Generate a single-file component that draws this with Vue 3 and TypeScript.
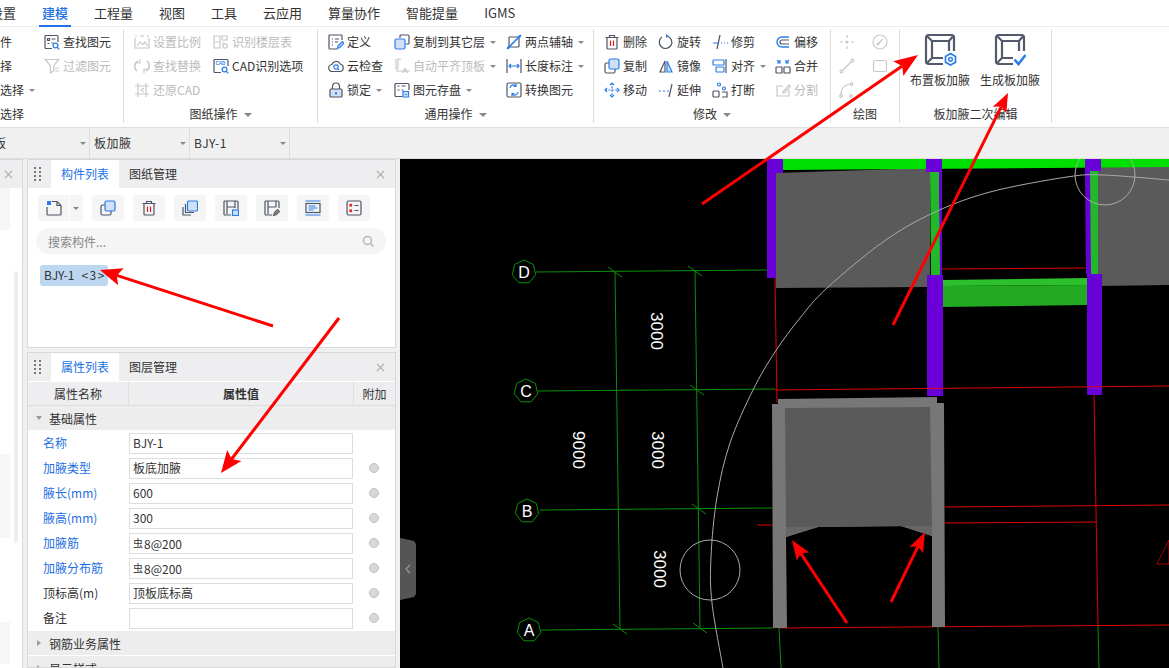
<script setup lang="ts">
const D = '#4d5567'
const B = '#2b7de9'
const G = '#c8c8c8'
const L = '#cfe0f7'

const icons: Record<string, string> = {
  find: `<path d="M8 14.5H2a1 1 0 0 1-1-1v-11a1 1 0 0 1 1-1h11a1 1 0 0 1 1 1V8"/><path d="M3.5 4.5h2v2h-2zM7.5 5h4M3.5 9.5h2M7.5 9h2"/><circle cx="11.5" cy="11.5" r="2.4" stroke="${B}"/><path d="M13.3 13.3l2 2" stroke="${B}"/>`,
  filter: `<path d="M1 1.5h14L9.8 7.5v5l-3.4 2.5V7.5z" stroke="${G}"/><path d="M11 10h4M11 13h4" stroke="${G}"/>`,
  scale: `<path d="M1 4v10h14V4M1 2h2M6 2h4M13 2h2" stroke="${G}"/><path d="M3 12l3-4 3 2.5L11 8l2.5 4" stroke="${G}"/>`,
  floors: `<path d="M1 2h6v12H1zM1 8h6M9 2h5v4H9zM9 9h2" stroke="${G}"/><circle cx="12" cy="12" r="2.2" stroke="${G}"/>`,
  replace: `<path d="M4 3a6 6 0 0 0-1 10M12 13a6 6 0 0 0 1-10" stroke="${G}" stroke-width="1.6"/><path d="M6 1v4H3M10 15v-4h3" stroke="${G}"/>`,
  cadopt: `<path d="M8 14.5H2a1 1 0 0 1-1-1v-11a1 1 0 0 1 1-1h12a1 1 0 0 1 1 1V8"/><text x="2.4" y="6.5" font-size="4.6" font-weight="700" fill="${B}" stroke="none" font-family="Liberation Sans">CAD</text><circle cx="11.5" cy="11.5" r="2.4" stroke="${B}"/><path d="M13.3 13.3l2 2" stroke="${B}"/>`,
  restore: `<path d="M1 4h14M1 12h14M4 1v14M12 1v14" stroke="${G}"/><path d="M10 6l-3 2 3 2" stroke="${G}"/>`,
  define: `<path d="M14 6V2a1 1 0 0 0-1-1H2a1 1 0 0 0-1 1v12a1 1 0 0 0 1 1h7"/><path d="M4 5h1M7 5h4M4 8h1M7 8h3M4 11h1"/><path d="M9.5 14.5l.6-2.6 4.4-4.4 1.6 1.6-4.4 4.4z" stroke="${B}" fill="${L}"/>`,
  cloud: `<path d="M4.5 13.5a3.5 3.5 0 0 1-.6-7A4.5 4.5 0 0 1 12.2 6a3.8 3.8 0 0 1-.4 7.5z"/><circle cx="8" cy="9" r="2.2" stroke="${B}"/><path d="M9.6 10.6l1.4 1.4" stroke="${B}"/>`,
  lock: `<rect x="2" y="7" width="12" height="8" rx="1" fill="${L}"/><path d="M4.5 7V4.5a3.5 3.5 0 0 1 7 0V7"/><path d="M8 10v2.5" stroke="${B}" stroke-width="1.8"/>`,
  copylayer: `<rect x="1" y="5" width="10" height="10" rx="1.5" fill="${L}" stroke="${B}"/><path d="M6 4V2a1 1 0 0 1 1-1h7a1 1 0 0 1 1 1v7a1 1 0 0 1-1 1h-2"/>`,
  align: `<path d="M2 1v10h2M7 1H4v10M2 13h14" stroke="${G}"/><text x="8" y="15" font-size="8" font-weight="700" fill="${G}" stroke="none" font-family="Liberation Sans">A</text>`,
  save: `<path d="M8 14.5H2a1 1 0 0 1-1-1v-11a1 1 0 0 1 1-1h12a1 1 0 0 1 1 1V8"/><path d="M3.5 4h2M7.5 4h4M3.5 8h2M7.5 8h2"/><path d="M9 9.5h5.5V15H9z" fill="${L}" stroke="${B}"/><path d="M11 12.5h1.8" stroke="${B}"/>`,
  twopoint: `<path d="M3 3h10M3 3v10M13 3v10M3 13h10"/><path d="M1 15L15 1" stroke="${B}" stroke-width="1.6"/><circle cx="2.5" cy="13.5" r="1.3" fill="${B}" stroke="none"/><circle cx="13.5" cy="2.5" r="1.3" fill="${B}" stroke="none"/>`,
  dim: `<path d="M1 1v14M15 1v14"/><path d="M3 8h10M5 6L3 8l2 2M11 6l2 2-2 2" stroke="${B}"/>`,
  convert: `<rect x="1" y="1" width="14" height="14" rx="1.5"/><path d="M4 6a3.5 3.5 0 0 1 6-2M10 2v2.5H7.5M12 10a3.5 3.5 0 0 1-6 2M6 14v-2.5h2.5" stroke="${B}"/>`,
  del: `<path d="M1.5 3.5h13M5.5 3.5V1.5h5v2M3 3.5V14a1 1 0 0 0 1 1h8a1 1 0 0 0 1-1V3.5"/><path d="M6.5 6.5v5.5M9.5 6.5v5.5" stroke="#e02020"/>`,
  rotate: `<path d="M9.5 2.2A6.3 6.3 0 1 1 4 3"/><path d="M8 0v4l3-2z" fill="${B}" stroke="none"/>`,
  trim: `<path d="M1 9h6M9 9h1M12 9h1M15 9h1" stroke="${B}"/><path d="M8 1L5 15"/>`,
  copy: `<rect x="1" y="5" width="10" height="10" rx="1.5"/><rect x="5" y="1" width="10" height="10" rx="1.5" fill="${L}" stroke="${B}"/>`,
  mirror: `<path d="M7 3L2 14h5z"/><path d="M9 3l5 11H9z" fill="${L}" stroke="${B}"/>`,
  move: `<path d="M8 1v14M1 8h14" stroke="${B}" stroke-dasharray="2 1.4"/><path d="M6 3l2-2 2 2M6 13l2 2 2-2M3 6L1 8l2 2M13 6l2 2-2 2" stroke="${B}"/>`,
  extend: `<path d="M1 9h2M5 9h2M9 9h2" stroke="${B}"/><path d="M14 2l-3 13"/>`,
  alignbox: `<path d="M14 1v14"/><rect x="1" y="2" width="11" height="5" rx=".8" stroke="${B}"/><rect x="4" y="9" width="8" height="5" rx=".8" stroke="${B}"/>`,
  breakline: `<circle cx="7" cy="2.5" r="1.5" stroke="${B}"/><circle cx="12" cy="6.5" r="1.5" stroke="${B}"/><rect x="1" y="9" width="6" height="6" rx="1"/><path d="M10 10h5v5h-5"/>`,
  offset: `<path d="M14 3H7a5 5 0 0 0 0 10h7" stroke="${B}" stroke-width="1.4"/><path d="M14 6H7a2 2 0 0 0 0 4h7"/>`,
  merge: `<rect x="1" y="9" width="6" height="6" rx=".6"/><rect x="9" y="9" width="6" height="6" rx=".6"/><path d="M2 2l3 3M5 2v3H2M14 2l-3 3M11 2v3h3" stroke="${B}"/>`,
  split: `<path d="M8 4H2v10h12V8" stroke="${G}"/><path d="M8 10l6-7 1.5 1.5-6 6.5H8z" stroke="${G}"/>`,
  point: `<path d="M1 8h3M12 8h3M8 1v3M8 12v3" stroke="${G}"/><circle cx="8" cy="8" r="1.6" fill="${G}" stroke="none"/>`,
  dial: `<circle cx="8" cy="8" r="7" stroke="${G}"/><path d="M6 10l5-5" stroke="${G}"/><circle cx="6" cy="10" r="1" stroke="${G}"/>`,
  line: `<path d="M3.5 12.5l9-9" stroke="${G}"/><circle cx="2.5" cy="13.5" r="1.4" stroke="${G}"/><circle cx="13.5" cy="2.5" r="1.4" stroke="${G}"/>`,
  rect: `<rect x="1.5" y="2.5" width="13" height="11" rx="1.5" stroke="${G}"/>`,
  arc: `<path d="M2 13C2 7 5 3 11 2" stroke="${G}"/><circle cx="2" cy="14" r="1.3" stroke="${G}"/><circle cx="12.5" cy="2" r="1.3" stroke="${G}"/><circle cx="12" cy="14" r="1.3" stroke="${G}"/>`,
  newdoc: `<path d="M6 1.5h5l4 4V14a1 1 0 0 1-1 1H2a1 1 0 0 1-1-1V7"/><path d="M11 1.5V5.5h4"/><path d="M1 1h4v4H1z" fill="${B}" stroke="none"/>`,
  copymany: `<rect x="5.5" y="1" width="10" height="10" rx="1.2" fill="${L}" stroke="${B}"/><path d="M3.5 4v8.5H12M1 7v8h8"/>`,
  library: `<path d="M8 15H2a1 1 0 0 1-1-1V2a1 1 0 0 1 1-1h12a1 1 0 0 1 1 1v7"/><path d="M4 1v13M12 1v7M4 7h8"/><rect x="9.5" y="10" width="6" height="5.5" fill="${L}" stroke="${B}"/>`,
  pick: `<path d="M8 15H2a1 1 0 0 1-1-1V2a1 1 0 0 1 1-1h12a1 1 0 0 1 1 1v6"/><path d="M4 1v13M12 1v6M4 7h8"/><path d="M9.5 15.5l1-3 3-3 2 2-3 3z" fill="#888" stroke="#666"/>`,
  textblock: `<path d="M.5 1h15M.5 15h15" stroke="${B}"/><rect x="1" y="3.5" width="14" height="9"/><path d="M3.5 6h7M3.5 8h9M3.5 10h5" stroke="${B}"/>`,
  checklist: `<rect x="1" y="1" width="14" height="14" rx="1.5"/><path d="M3.5 4L6 6.5M6 4L3.5 6.5M3.5 9.500L6 12M6 9.500L3.5 12" stroke="#e02020"/><path d="M8.5 5.5h4M8.5 10.500h4"/>`,
  search: `<circle cx="5.5" cy="5.500" r="4" stroke="#b5b5b5" stroke-width="1.5"/><path d="M8.500 8.500l3 3" stroke="#b5b5b5" stroke-width="1.5"/>`,
}

const bigFrame = `<path d="M30 18V4.5A2.5 2.5 0 0 0 27.5 2h-23A2.5 2.5 0 0 0 2 4.5v24A2.5 2.5 0 0 0 4.5 31H19"/><path d="M8 8h17v10M8 8v17h11M3 3l5 5M29.300 3l-4.300 5M8 25l-5 5"/>`
const bigGear = `<path d="M26.5 20.5l5 2.900v5.800l-5 2.900-5-2.900v-5.800z" stroke="${B}" stroke-width="1.7"/><circle cx="26.5" cy="26.300" r="1.9" stroke="${B}" stroke-width="1.5"/>`
const bigCheck = `<path d="M20.5 26.5l4 4.5 7-9" stroke="${B}" stroke-width="2.6"/>`

interface Item { icon?: string; text?: string; off?: boolean; caret?: boolean }
interface Group { width: number; pad: number; cols: { w: number; items: Item[] }[]; label: string; more?: boolean; left?: boolean }

const menus = ['设置', '建模', '工程量', '视图', '工具', '云应用', '算量协作', '智能提量', 'IGMS']

const groups: Group[] = [
  {
    width: 124, pad: 0, label: '选择', left: true,
    cols: [
      { w: 44, items: [{ text: '件' }, { text: '择' }, { text: '选择', caret: true }] },
      { w: 79, items: [{ icon: 'find', text: '查找图元' }, { icon: 'filter', text: '过滤图元', off: true }] },
    ],
  },
  {
    width: 194, pad: 10, label: '图纸操作', more: true,
    cols: [
      { w: 79, items: [{ icon: 'scale', text: '设置比例', off: true }, { icon: 'replace', text: '查找替换', off: true }, { icon: 'restore', text: '还原CAD', off: true }] },
      { w: 100, items: [{ icon: 'floors', text: '识别楼层表', off: true }, { icon: 'cadopt', text: 'CAD识别选项' }] },
    ],
  },
  {
    width: 276, pad: 10, label: '通用操作', more: true,
    cols: [
      { w: 66, items: [{ icon: 'define', text: '定义' }, { icon: 'cloud', text: '云检查' }, { icon: 'lock', text: '锁定', caret: true }] },
      { w: 112, items: [{ icon: 'copylayer', text: '复制到其它层', caret: true }, { icon: 'align', text: '自动平齐顶板', off: true, caret: true }, { icon: 'save', text: '图元存盘', caret: true }] },
      { w: 84, items: [{ icon: 'twopoint', text: '两点辅轴', caret: true }, { icon: 'dim', text: '长度标注', caret: true }, { icon: 'convert', text: '转换图元' }] },
    ],
  },
  {
    width: 237, pad: 10, label: '修改', more: true,
    cols: [
      { w: 54, items: [{ icon: 'del', text: '删除' }, { icon: 'copy', text: '复制' }, { icon: 'move', text: '移动' }] },
      { w: 54, items: [{ icon: 'rotate', text: '旋转' }, { icon: 'mirror', text: '镜像' }, { icon: 'extend', text: '延伸' }] },
      { w: 63, items: [{ icon: 'trim', text: '修剪' }, { icon: 'alignbox', text: '对齐', caret: true }, { icon: 'breakline', text: '打断' }] },
      { w: 50, items: [{ icon: 'offset', text: '偏移' }, { icon: 'merge', text: '合并' }, { icon: 'split', text: '分割', off: true }] },
    ],
  },
  {
    width: 69, pad: 8, label: '绘图',
    cols: [
      { w: 33, items: [{ icon: 'point' }, { icon: 'line' }, { icon: 'arc' }] },
      { w: 22, items: [{ icon: 'dial' }, { icon: 'rect' }] },
    ],
  },
]

const bigButtons = [
  { label: '布置板加腋', svg: bigFrame + bigGear },
  { label: '生成板加腋', svg: bigFrame + bigCheck },
]

const selectors = ['板', '板加腋', 'BJY-1']
const toolIcons = ['copy', 'del', 'copymany', 'library', 'pick', 'textblock', 'checklist']

const props = [
  { name: '名称', value: 'BJY-1', blue: true, radio: false },
  { name: '加腋类型', value: '板底加腋', blue: true, radio: true },
  { name: '腋长(mm)', value: '600', blue: true, radio: true },
  { name: '腋高(mm)', value: '300', blue: true, radio: true },
  { name: '加腋筋', value: '8@200', rebar: true, blue: true, radio: true },
  { name: '加腋分布筋', value: '8@200', rebar: true, blue: true, radio: true },
  { name: '顶标高(m)', value: '顶板底标高', blue: false, radio: true },
  { name: '备注', value: '', blue: false, radio: true },
]

// drawing, in page coordinates
const redLines = [
  [942, 269, 1085, 268], [775, 390, 1169, 386], [775, 278, 777, 403], [1094, 395, 1098, 626],
  [945, 507, 1169, 505], [945, 523, 1096, 522], [757, 525, 772, 525], [780, 628, 1169, 625],
]
const greenLines = [
  [536, 272, 767, 270], [538, 391, 775, 389], [540, 510, 772, 508], [541, 630, 773, 628],
  [615, 272, 620, 629], [695, 271, 700, 628], [779, 628, 781, 668], [938, 627, 939, 668], [1098, 626, 1099, 668],
]
const ticks = [[615, 272], [695, 271], [697, 390], [699, 509], [700, 628], [620, 629]]
const axes = [
  { t: 'D', x: 524, y: 272 }, { t: 'C', x: 526, y: 391 }, { t: 'B', x: 527, y: 511 }, { t: 'A', x: 529, y: 630 },
]
const dims = [
  { t: '3000', x: 656, y: 331 }, { t: '3000', x: 657, y: 450 }, { t: '3000', x: 659, y: 569 }, { t: '9000', x: 578, y: 450 },
]
const arcPoints = [
  [723, 668], [712, 603], [711, 557], [717, 497], [730, 443], [753, 390], [775, 352], [800, 318], [827, 288],
  [883, 242], [933, 213], [990, 192], [1067, 177], [1103, 175], [1169, 180],
]

// smooth curve through the measured points of the big arc
function smoothPath(pts: number[][]): string {
  let d = `M${pts[0][0]} ${pts[0][1]}`
  for (let i = 0; i < pts.length - 1; i++) {
    const p0 = pts[Math.max(i - 1, 0)]
    const p1 = pts[i]
    const p2 = pts[i + 1]
    const p3 = pts[Math.min(i + 2, pts.length - 1)]
    const c1x = p1[0] + (p2[0] - p0[0]) / 6
    const c1y = p1[1] + (p2[1] - p0[1]) / 6
    const c2x = p2[0] - (p3[0] - p1[0]) / 6
    const c2y = p2[1] - (p3[1] - p1[1]) / 6
    d += `C${c1x.toFixed(1)} ${c1y.toFixed(1)} ${c2x.toFixed(1)} ${c2y.toFixed(1)} ${p2[0]} ${p2[1]}`
  }
  return d
}
const arcPath = smoothPath(arcPoints)

function heptagon(cx: number, cy: number, r: number): string {
  const pts: string[] = []
  for (let i = 0; i < 7; i++) {
    const a = (Math.PI * 2 * i) / 7 - Math.PI / 2
    pts.push(`${(cx + r * Math.cos(a)).toFixed(1)},${(cy + r * Math.sin(a)).toFixed(1)}`)
  }
  return pts.join(' ')
}

function arrow(x1: number, y1: number, x2: number, y2: number, len: number, half: number, width: number) {
  const d = Math.hypot(x2 - x1, y2 - y1)
  const ux = (x2 - x1) / d
  const uy = (y2 - y1) / d
  const bx = x2 - ux * len
  const by = y2 - uy * len
  const nx = x2 - ux * (len * 0.8)
  const ny = y2 - uy * (len * 0.8)
  return {
    x1, y1, x2: nx, y2: ny, width,
    head: `${x2},${y2} ${bx - uy * half},${by + ux * half} ${nx},${ny} ${bx + uy * half},${by - ux * half}`,
  }
}

const arrows = [
  arrow(702, 204, 918, 55, 24, 9, 3),
  arrow(893, 325, 1008, 93, 19, 7.5, 3),
  arrow(273, 326, 100, 270, 22, 9, 3),
  arrow(339, 318, 221, 473, 22, 9, 3),
  arrow(847, 623, 792, 540, 20, 7.5, 3),
  arrow(891, 602, 925, 532, 20, 7.5, 3),
]
</script>

<template>
  <div class="page">
    <nav class="menu">
      <span v-for="m in menus" :key="m" class="menu-tab" :class="{ active: m === '建模' }">{{ m }}</span>
    </nav>

    <div class="ribbon">
      <section v-for="g in groups" :key="g.label" class="group" :style="{ width: g.width + 'px' }">
        <div class="group-body" :style="{ paddingLeft: g.pad + 'px' }">
          <div v-for="(c, ci) in g.cols" :key="ci" class="col" :style="{ width: c.w + 'px' }">
            <div v-for="(it, ii) in c.items" :key="ii" class="item" :class="{ off: it.off }">
              <svg v-if="it.icon" class="ico" viewBox="0 0 16 16" fill="none" :stroke="D" stroke-width="1.2" v-html="icons[it.icon]"></svg>
              <span v-if="it.text" class="item-text">{{ it.text }}</span>
              <i v-if="it.caret" class="caret"></i>
            </div>
          </div>
        </div>
        <div class="group-label" :class="{ left: g.left }">
          {{ g.label }}<i v-if="g.more" class="caret big"></i>
        </div>
      </section>

      <section class="group big-group">
        <div class="big-row">
          <div v-for="b in bigButtons" :key="b.label" class="big-btn">
            <svg class="big-ico" viewBox="0 0 33 33" fill="none" stroke="#535a6b" stroke-width="2.2" v-html="b.svg"></svg>
            <span>{{ b.label }}</span>
          </div>
        </div>
        <div class="group-label">板加腋二次编辑</div>
      </section>
    </div>

    <div class="selectors">
      <div v-for="s in selectors" :key="s" class="selector">
        <span class="item-text">{{ s }}</span>
        <i class="caret"></i>
      </div>
    </div>

    <main class="main">
      <aside class="stub">
        <div class="stub-head">
          <svg class="close" viewBox="0 0 10 10"><path d="M1 1l8 8M9 1L1 9" /></svg>
        </div>
        <div class="stub-body">
          <div class="patches">
            <div class="patch p1"></div>
            <div class="patch p2"></div>
            <div class="patch p3"></div>
          </div>
          <div class="stub-scroll"></div>
        </div>
      </aside>

      <div class="panels">
        <section class="panel list-panel">
          <header class="panel-head">
            <svg class="grip" viewBox="0 0 8 14"><path d="M0 0h2v2H0zM5 0h2v2H5zM0 4h2v2H0zM5 4h2v2H5zM0 8h2v2H0zM5 8h2v2H5zM0 12h2v2H0zM5 12h2v2H5z" /></svg>
            <span class="tab active">构件列表</span>
            <span class="tab">图纸管理</span>
            <svg class="close" viewBox="0 0 10 10"><path d="M1 1l8 8M9 1L1 9" /></svg>
          </header>
          <div class="tools">
            <div class="tool split">
              <span class="split-main">
                <svg class="ico" viewBox="0 0 16 16" fill="none" :stroke="D" stroke-width="1.2" v-html="icons.newdoc"></svg>
              </span>
              <span class="split-arrow"><i class="caret"></i></span>
            </div>
            <div v-for="t in toolIcons" :key="t" class="tool">
              <svg class="ico" viewBox="0 0 16 16" fill="none" :stroke="D" stroke-width="1.2" v-html="icons[t]"></svg>
            </div>
          </div>
          <div class="search">
            <span>搜索构件...</span>
            <svg class="search-ico" viewBox="0 0 12 12" fill="none" v-html="icons.search"></svg>
          </div>
          <div class="chip"><span>BJY-1</span><span class="chip-count">&lt;3&gt;</span></div>
        </section>

        <section class="panel prop-panel">
          <header class="panel-head">
            <svg class="grip" viewBox="0 0 8 14"><path d="M0 0h2v2H0zM5 0h2v2H5zM0 4h2v2H0zM5 4h2v2H5zM0 8h2v2H0zM5 8h2v2H5zM0 12h2v2H0zM5 12h2v2H5z" /></svg>
            <span class="tab active">属性列表</span>
            <span class="tab">图层管理</span>
            <svg class="close" viewBox="0 0 10 10"><path d="M1 1l8 8M9 1L1 9" /></svg>
          </header>
          <div class="prop-head">
            <span class="c-name">属性名称</span>
            <span class="c-value">属性值</span>
            <span class="c-add">附加</span>
          </div>
          <div class="section"><i class="tri down"></i>基础属性</div>
          <div v-for="p in props" :key="p.name" class="prop-row">
            <span class="prop-name" :class="{ blue: p.blue }">{{ p.name }}</span>
            <div class="prop-input">
              <span v-if="p.rebar" class="rebar">虫</span>{{ p.value }}
            </div>
            <div class="prop-add"><i v-if="p.radio" class="radio"></i></div>
          </div>
          <div class="section"><i class="tri"></i>钢筋业务属性</div>
          <div class="section"><i class="tri"></i>显示样式</div>
        </section>
      </div>

      <div class="canvas">
        <svg class="drawing" viewBox="400 159 769 509" width="769" height="509">
          <!-- upper slabs and beams -->
          <polygon points="775,173 930,168 930,287 776,288" fill="#5a5a5a" />
          <polygon points="1098,167 1169,167 1169,285 1098,286" fill="#5a5a5a" />
          <polygon points="783,159 1169,159 1169,167 783,170" fill="#00e000" />
          <polygon points="930,172 939,172 941,275 931,275" fill="#22b82a" />
          <polygon points="1089,171 1098,171 1098,274 1090,274" fill="#22b82a" />
          <polygon points="939,172 942,172 942,275 940,275" fill="#6a00d8" />
          <polygon points="1085,171 1090,171 1091,274 1086,274" fill="#6a00d8" />
          <polygon points="943,280 1087,278 1087,285 943,286" fill="#2cc02c" />
          <polygon points="943,286 1087,285 1087,305 943,307" fill="#22aa22" />
          <polygon points="767,159 783,159 783,173 776,173 776,278 767,278" fill="#6a00d8" />
          <rect x="926" y="159" width="16" height="13" fill="#6a00d8" />
          <rect x="1085" y="159" width="16" height="12" fill="#6a00d8" />
          <rect x="927" y="275" width="16" height="121" fill="#6a00d8" />
          <rect x="1087" y="274" width="15" height="121" fill="#6a00d8" />

          <!-- grid lines -->
          <line v-for="(l, i) in redLines" :key="'r' + i" :x1="l[0]" :y1="l[1]" :x2="l[2]" :y2="l[3]" stroke="#e00000" />
          <line v-for="(l, i) in greenLines" :key="'g' + i" :x1="l[0]" :y1="l[1]" :x2="l[2]" :y2="l[3]" stroke="#0a900a" />
          <line v-for="(t, i) in ticks" :key="'t' + i" :x1="t[0] - 7" :y1="t[1] - 5" :x2="t[0] + 7" :y2="t[1] + 5" stroke="#0a900a" />
          <polygon points="1157,564 1169,540 1169,564" fill="none" stroke="#a00" />

          <!-- lower slab with haunches -->
          <polygon points="778,399 937,397 937,403 944,403 945,627 932,627 932,536 901,526 818,527 786,537 787,628 773,628 772,404 778,404" fill="#777" />
          <polygon points="785,408 930,407 932,526 786,527" fill="#5a5a5a" />
          <polygon points="786,527 818,527 786,537" fill="#666" />
          <polygon points="901,526 932,526 932,536" fill="#666" />

          <!-- circles -->
          <path :d="arcPath" fill="none" stroke="#aaa" />
          <circle cx="1105" cy="175" r="30" fill="none" stroke="#aaa" />
          <circle cx="710" cy="570" r="30" fill="none" stroke="#aaa" />

          <!-- axis bubbles and dimensions -->
          <g v-for="a in axes" :key="a.t">
            <polygon :points="heptagon(a.x, a.y, 12)" fill="#000" stroke="#0a900a" />
            <text :x="a.x" :y="a.y + 6" class="axis-text" text-anchor="middle">{{ a.t }}</text>
          </g>
          <text
            v-for="d in dims"
            :key="d.x + '-' + d.y"
            class="dim-text"
            text-anchor="middle"
            :transform="`translate(${d.x - 5},${d.y}) rotate(90)`"
          >{{ d.t }}</text>
        </svg>
        <div class="handle">
          <svg viewBox="0 0 16 62" width="16" height="62">
            <path d="M0 0l14 3 2 3v50l-2 3-14 3z" fill="#555" />
            <path d="M10 27l-4 4 4 4" fill="none" stroke="#999" stroke-width="1.2" />
          </svg>
        </div>
      </div>
    </main>

    <svg class="arrows" viewBox="0 0 1169 668" width="1169" height="668">
      <g v-for="(a, i) in arrows" :key="i">
        <line :x1="a.x1" :y1="a.y1" :x2="a.x2" :y2="a.y2" stroke="#f00" :stroke-width="a.width" />
        <polygon :points="a.head" fill="#f00" />
      </g>
    </svg>
  </div>
</template>

<style scoped>
.page {
  position: relative;
  width: 1169px;
  height: 668px;
  overflow: hidden;
  display: flex;
  flex-direction: column;
  background: #f0f0f0;
  color: #333;
  font-family: "Noto Sans CJK SC", "Noto Sans", sans-serif;
  font-size: 12px;
}

.menu {
  display: flex;
  flex: none;
  height: 26px;
  margin-left: -23px;
  background: #fff;
  border-bottom: 1px solid #eee;
  font-size: 13px;
}

.menu-tab {
  margin: 0 10px;
  padding: 0 3px;
  line-height: 25px;
  height: 27px;
  box-sizing: border-box;
  white-space: nowrap;
}

.menu-tab.active {
  color: #2172e5;
  font-weight: 500;
  border-bottom: 2px solid #2172e5;
}

.ribbon {
  display: flex;
  flex: none;
  height: 101px;
  padding-top: 2px;
  box-sizing: border-box;
  background: #fff;
  border-bottom: 1px solid #ddd;
}

.group {
  flex: none;
  display: flex;
  flex-direction: column;
  height: 94px;
  box-sizing: border-box;
  border-right: 1px solid #ddd;
}

.group-body {
  display: flex;
  flex: none;
  height: 73px;
  padding-top: 1px;
}

.col {
  flex: none;
}

.item {
  display: flex;
  align-items: center;
  height: 24px;
  white-space: nowrap;
}

.item-text {
  margin-bottom: 2px;
}

.item.off {
  color: #bbb;
}

.ico {
  flex: none;
  width: 16px;
  height: 16px;
  margin-right: 3px;
}

.caret {
  display: inline-block;
  flex: none;
  width: 0;
  height: 0;
  margin-left: 5px;
  border: 3px solid transparent;
  border-top: 3px solid #888;
  border-bottom: 0;
}

.caret.big {
  margin-left: 6px;
  border-width: 4px 4px 0;
  vertical-align: 2px;
}

.group-label {
  flex: none;
  height: 24px;
  line-height: 24px;
  text-align: center;
  margin-top: -1px;
}

.group-label.left {
  text-align: left;
}

.big-group {
  width: 152px;
}

.big-row {
  display: flex;
  flex: none;
  gap: 10px;
  height: 74px;
  padding: 4px 0 0 10px;
  box-sizing: border-box;
}

.big-btn {
  display: flex;
  flex-direction: column;
  align-items: center;
  width: 60px;
  white-space: nowrap;
}

.big-ico {
  flex: none;
  width: 33px;
  height: 33px;
}

.big-btn span {
  margin-top: 5px;
}

.selectors {
  display: flex;
  flex: none;
  height: 31px;
  margin-left: -10px;
  box-sizing: border-box;
  background: #f0f0f0;
  border-bottom: 1px solid #ddd;
}

.selector {
  display: flex;
  align-items: center;
  justify-content: space-between;
  width: 100px;
  padding: 0 3px 0 4px;
  box-sizing: border-box;
  border-right: 1px solid #ddd;
  letter-spacing: 0.5px;
}

.main {
  flex: 1;
  display: flex;
  min-height: 0;
}

.stub {
  flex: none;
  width: 23px;
  box-sizing: border-box;
  background: #fff;
  border-top: 1px solid #d8d8d8;
  border-right: 1px solid #d8d8d8;
  margin-right: 4px;
  display: flex;
  flex-direction: column;
}

.stub-head {
  flex: none;
  display: flex;
  align-items: center;
  height: 28px;
  background: #eeeef0;
  padding-left: 4px;
}

.stub-body {
  flex: 1;
  display: flex;
  gap: 4px;
}

.patches {
  width: 10px;
}

.patch {
  background: #f5f6f8;
}

.p1 {
  height: 42px;
}

.p2 {
  height: 84px;
  margin-top: 224px;
}

.p3 {
  height: 42px;
  margin-top: 84px;
}

.stub-scroll {
  width: 4px;
  height: 272px;
  margin-top: 83px;
  background: #eee;
  border-radius: 2px;
}

.close {
  flex: none;
  width: 9px;
  height: 9px;
  fill: none;
  stroke: #aaa;
  stroke-width: 1.2;
}

.panels {
  flex: none;
  width: 369px;
  margin-right: 4px;
  display: flex;
  flex-direction: column;
  gap: 4px;
}

.panel {
  box-sizing: border-box;
  background: #fff;
  border: 1px solid #d8d8d8;
}

.list-panel {
  flex: none;
  height: 189px;
}

.prop-panel {
  flex: 1;
  min-height: 0;
  overflow: hidden;
}

.panel-head {
  display: flex;
  align-items: center;
  height: 28px;
  background: #eeeef0;
}

.grip {
  flex: none;
  width: 8px;
  height: 14px;
  margin: 0 9px 0 6px;
  fill: #777;
}

.tab {
  width: 68px;
  height: 28px;
  line-height: 27px;
  text-align: center;
}

.tab.active {
  background: #fff;
  color: #2172e5;
}

.panel-head .close {
  margin-left: auto;
  margin-right: 10px;
}

.tools {
  display: flex;
  gap: 9px;
  padding: 7px 0 0 10px;
}

.tool {
  display: flex;
  align-items: center;
  justify-content: center;
  width: 32px;
  height: 26px;
  background: #f5f5f5;
  border-radius: 3px;
}

.tool .ico {
  margin: 0;
}

.tool.split {
  width: 45px;
}

.split-main {
  display: flex;
  align-items: center;
  justify-content: center;
  width: 32px;
  height: 26px;
  border-right: 1px solid #fff;
}

.split-arrow {
  display: flex;
  align-items: center;
  width: 13px;
}

.split-arrow .caret {
  margin-left: 3px;
}

.search {
  display: flex;
  align-items: center;
  justify-content: space-between;
  height: 26px;
  margin: 7px 9px 0 8px;
  padding: 0 12px 0 12px;
  background: #f5f5f5;
  border-radius: 13px;
  color: #888;
}

.search-ico {
  flex: none;
  width: 12px;
  height: 12px;
}

.chip {
  display: flex;
  gap: 7px;
  width: 68px;
  height: 21px;
  line-height: 20px;
  margin: 11px 0 0 12px;
  padding-left: 4px;
  box-sizing: border-box;
  background: #bdd7f0;
  border-radius: 3px;
  white-space: nowrap;
}

.chip-count {
  letter-spacing: 1.5px;
}

.prop-head {
  display: flex;
  height: 24px;
  line-height: 24px;
  margin-top: 1px;
  text-align: center;
  background: #eeeef0;
  border-bottom: 1px solid #ddd;
  box-sizing: border-box;
}

.c-name {
  width: 101px;
  box-sizing: border-box;
  border-right: 1px solid #ddd;
}

.c-value {
  width: 225px;
  box-sizing: border-box;
  border-right: 1px solid #ddd;
  font-weight: 700;
}

.c-add {
  flex: 1;
}

.section {
  display: flex;
  align-items: center;
  height: 24px;
  margin-bottom: 1px;
  padding-left: 8px;
  background: #ededed;
}

.tri {
  flex: none;
  width: 0;
  height: 0;
  margin-right: 8px;
  margin-left: 1px;
  border: 3px solid transparent;
  border-left: 4px solid #999;
  border-right: 0;
}

.tri.down {
  margin-left: 0;
  margin-right: 7px;
  border-width: 4px 3px 0;
  border-style: solid;
  border-color: #999 transparent transparent;
}

.prop-row {
  display: flex;
  align-items: center;
  height: 25px;
}

.prop-name {
  width: 101px;
  padding-left: 15px;
  padding-bottom: 2px;
  box-sizing: border-box;
  white-space: nowrap;
}

.blue {
  color: #1e6fe0;
}

.prop-input {
  width: 224px;
  height: 21px;
  line-height: 17px;
  padding-left: 3px;
  box-sizing: border-box;
  border: 1px solid #ddd;
  white-space: nowrap;
}

.rebar {
  font-size: 10px;
  vertical-align: 2px;
  margin-right: 1px;
}

.prop-add {
  flex: 1;
  display: flex;
  justify-content: center;
  padding-right: 1px;
}

.radio {
  display: block;
  width: 8px;
  height: 8px;
  background: #d8d8d8;
  border: 1px solid #c0c0c0;
  border-radius: 50%;
  margin-bottom: 2px;
}

.canvas {
  position: relative;
  flex: 1;
  background: #000;
  overflow: hidden;
}

.drawing {
  display: block;
}

.axis-text {
  fill: #fff;
  font: 16px "Liberation Sans", sans-serif;
}

.dim-text {
  fill: #fff;
  font: 17px "Liberation Sans", sans-serif;
}

.handle {
  position: absolute;
  left: 0;
  top: 379px;
  width: 16px;
  height: 62px;
}

.handle svg {
  display: block;
}

.arrows {
  position: absolute;
  left: 0;
  top: 0;
  pointer-events: none;
}
</style>
